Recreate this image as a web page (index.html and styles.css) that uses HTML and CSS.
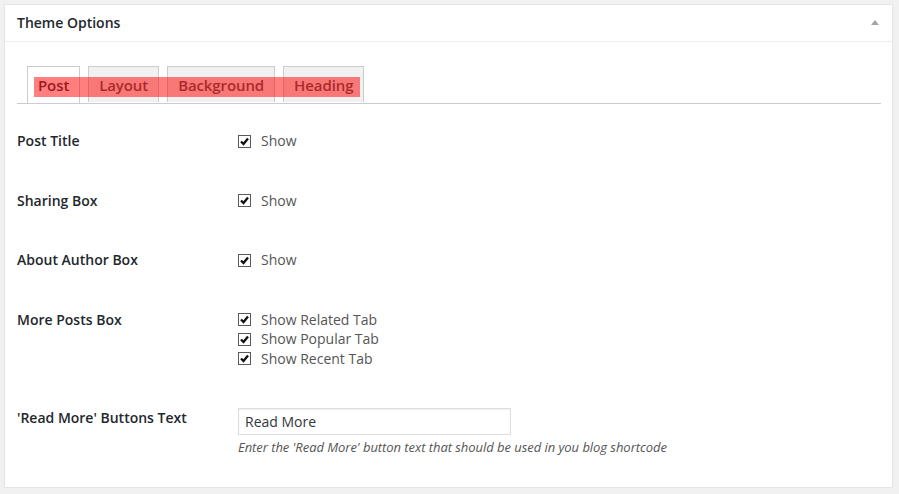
FILE: index.html
```html
<!DOCTYPE html>
<html>
<head>
<meta charset="utf-8">
<link rel="stylesheet" href="styles.css">
</head>
<body>
<div class="postbox">
  <div class="postbox-header">
    <h2 class="postbox-title">Theme Options</h2>
    <svg class="toggle" width="8" height="5" viewBox="0 0 8 5"><polygon points="4,0 8,5 0,5" fill="#a0a5aa"/></svg>
  </div>
  <div class="inside">
    <div class="nav">
      <span class="tab active">Post</span>
      <span class="tab">Layout</span>
      <span class="tab">Background</span>
      <span class="tab">Heading</span>
      <div class="highlight"></div>
    </div>
    <div class="form">
      <div class="row">
        <div class="label">Post Title</div>
        <div class="value">
          <label class="check"><span class="cb"><svg width="11" height="11" viewBox="0 0 11 11"><path d="M2 5.5 L4.5 8 L9 2.5" fill="none" stroke="#111" stroke-width="2.3"/></svg></span>Show</label>
        </div>
      </div>
      <div class="row">
        <div class="label">Sharing Box</div>
        <div class="value">
          <label class="check"><span class="cb"><svg width="11" height="11" viewBox="0 0 11 11"><path d="M2 5.5 L4.5 8 L9 2.5" fill="none" stroke="#111" stroke-width="2.3"/></svg></span>Show</label>
        </div>
      </div>
      <div class="row">
        <div class="label">About Author Box</div>
        <div class="value">
          <label class="check"><span class="cb"><svg width="11" height="11" viewBox="0 0 11 11"><path d="M2 5.5 L4.5 8 L9 2.5" fill="none" stroke="#111" stroke-width="2.3"/></svg></span>Show</label>
        </div>
      </div>
      <div class="row">
        <div class="label">More Posts Box</div>
        <div class="value">
          <label class="check"><span class="cb"><svg width="11" height="11" viewBox="0 0 11 11"><path d="M2 5.5 L4.5 8 L9 2.5" fill="none" stroke="#111" stroke-width="2.3"/></svg></span>Show Related Tab</label>
          <label class="check"><span class="cb"><svg width="11" height="11" viewBox="0 0 11 11"><path d="M2 5.5 L4.5 8 L9 2.5" fill="none" stroke="#111" stroke-width="2.3"/></svg></span>Show Popular Tab</label>
          <label class="check"><span class="cb"><svg width="11" height="11" viewBox="0 0 11 11"><path d="M2 5.5 L4.5 8 L9 2.5" fill="none" stroke="#111" stroke-width="2.3"/></svg></span>Show Recent Tab</label>
        </div>
      </div>
      <div class="row last">
        <div class="label">'Read More' Buttons Text</div>
        <div class="value">
          <input class="text" type="text" value="Read More">
          <p class="desc">Enter the 'Read More' button text that should be used in you blog shortcode</p>
        </div>
      </div>
    </div>
  </div>
</div>
</body>
</html>
```

FILE: styles.css
```css
html, body {
  margin: 0;
  padding: 0;
  background: #f1f1f1;
}
body {
  font-family: "Open Sans", "Liberation Sans", sans-serif;
  font-size: 14px;
  color: #444;
}
.postbox {
  margin: 4px 6px 0 4px;
  background: #fff;
  border: 1px solid #e5e5e5;
  box-shadow: 0 1px 1px rgba(0,0,0,.04);
  height: 484px;
  box-sizing: border-box;
}
.postbox-header {
  height: 36px;
  border-bottom: 1px solid #eee;
  display: flex;
  align-items: center;
  justify-content: space-between;
  padding: 0 13px 0 12px;
}
.postbox-title {
  margin: 0;
  font-size: 14px;
  font-weight: 600;
  color: #23282d;
  line-height: 1.4;
}
.toggle {
  display: block;
  margin-top: -1px;
}
.inside {
  padding: 24px 11px 0 12px;
}
.nav {
  position: relative;
  display: flex;
  gap: 8px;
  padding-left: 10px;
  border-bottom: 1px solid #ccc;
  height: 37px;
}
.tab {
  display: block;
  height: 36px;
  box-sizing: border-box;
  border: 1px solid #ccc;
  border-bottom: none;
  padding: 6px 10px 0;
  font-size: 15px;
  font-weight: 600;
  line-height: 24px;
  letter-spacing: -0.1px;
  color: #555;
  background: #f1f1f1;
}
.tab.active {
  background: #fff;
  height: 37px;
  color: #32373c;
}
.highlight {
  position: absolute;
  left: 17px;
  top: 11px;
  width: 326px;
  height: 20px;
  background: rgba(255,0,0,0.5);
}
.form {
  padding-top: 7px;
}
.row {
  display: flex;
  padding: 20px 0;
}
.label {
  width: 221px;
  flex: none;
  font-weight: 600;
  color: #23282d;
  line-height: 19.5px;
}
.value {
  display: flex;
  flex-direction: column;
}
.check {
  display: flex;
  align-items: center;
  height: 19.5px;
  color: #555;
  line-height: 19.5px;
}
.cb {
  width: 13px;
  height: 13px;
  box-sizing: border-box;
  border: 1px solid #5a5a5a;
  background: #fff;
  margin-right: 10px;
  display: flex;
  align-items: center;
  justify-content: center;
  margin-top: 1px;
}
.cb svg {
  display: block;
}
.text {
  width: 273px;
  height: 27px;
  box-sizing: border-box;
  border: 1px solid #ddd;
  box-shadow: inset 0 1px 2px rgba(0,0,0,.07);
  padding: 0 6px;
  font-family: "Open Sans", "Liberation Sans", sans-serif;
  font-size: 14px;
  color: #32373c;
  margin: 0;
  outline: none;
}
.desc {
  margin: 3px 0 0;
  font-size: 13px;
  font-style: italic;
  color: #555;
  line-height: 18px;
  letter-spacing: -0.05px;
}
```
